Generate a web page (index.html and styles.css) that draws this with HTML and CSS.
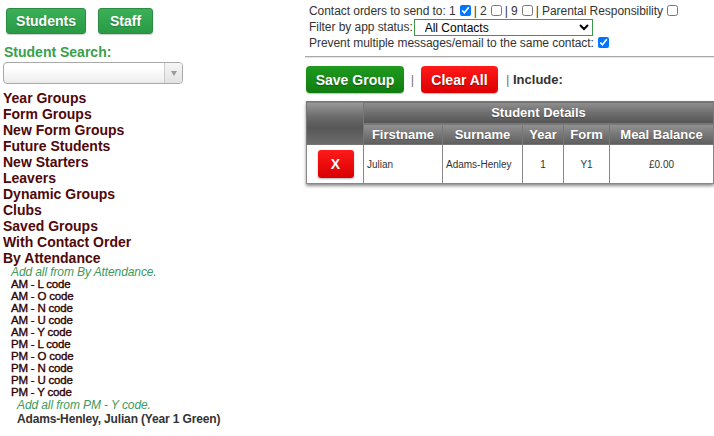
FILE: index.html
```html
<!DOCTYPE html>
<html>
<head>
<meta charset="utf-8">
<link rel="stylesheet" href="styles.css">
</head>
<body>
<div class="page">
  <div class="left">
    <div class="tabs">
      <button class="gbtn students">Students</button>
      <button class="gbtn staff">Staff</button>
    </div>
    <div class="search-label">Student Search:</div>
    <div class="chosen"><span class="chosen-arrow"><span class="tri"></span></span></div>
    <ul class="menu">
      <li>Year Groups</li>
      <li>Form Groups</li>
      <li>New Form Groups</li>
      <li>Future Students</li>
      <li>New Starters</li>
      <li>Leavers</li>
      <li>Dynamic Groups</li>
      <li>Clubs</li>
      <li>Saved Groups</li>
      <li>With Contact Order</li>
      <li>By Attendance</li>
    </ul>
    <div class="addall">Add all from By Attendance.</div>
    <ul class="codes">
      <li>AM - L code</li>
      <li>AM - O code</li>
      <li>AM - N code</li>
      <li>AM - U code</li>
      <li>AM - Y code</li>
      <li>PM - L code</li>
      <li>PM - O code</li>
      <li>PM - N code</li>
      <li>PM - U code</li>
      <li>PM - Y code</li>
    </ul>
    <div class="addall sub">Add all from PM - Y code.</div>
    <div class="student">Adams-Henley, Julian (Year 1 Green)</div>
  </div>
  <div class="right">
    <div class="opts">
      <div class="row">Contact orders to send to: 1<input type="checkbox" checked>| 2<input type="checkbox">| 9<input type="checkbox">| Parental Responsibility<input type="checkbox"></div>
      <div class="row">Filter by app status:<select class="appsel"><option>All Contacts</option></select></div>
      <div class="row">Prevent multiple messages/email to the same contact:<input type="checkbox" checked></div>
    </div>
    <div class="rule"></div>
    <div class="actions">
      <button class="abtn save">Save Group</button>
      <span class="sep">|</span>
      <button class="abtn clear">Clear All</button>
      <span class="include"><span class="sep2">|</span> Include:</span>
    </div>
    <table class="grid">
      <colgroup>
        <col class="c0"><col class="c1"><col class="c2"><col class="c3"><col class="c4"><col class="c5">
      </colgroup>
      <thead>
        <tr class="h1">
          <th rowspan="2" class="corner"></th>
          <th colspan="5">Student Details</th>
        </tr>
        <tr class="h2">
          <th>Firstname</th>
          <th>Surname</th>
          <th>Year</th>
          <th>Form</th>
          <th>Meal Balance</th>
        </tr>
      </thead>
      <tbody>
        <tr>
          <td class="xcell"><button class="xbtn">X</button></td>
          <td class="l">Julian</td>
          <td class="l">Adams-Henley</td>
          <td>1</td>
          <td>Y1</td>
          <td>£0.00</td>
        </tr>
      </tbody>
    </table>
  </div>
</div>
</body>
</html>
```

FILE: styles.css
```css
* { box-sizing: border-box; }
html, body { margin: 0; padding: 0; background: #fff; }
body { font-family: "Liberation Sans", Arial, sans-serif; width: 714px; height: 436px; overflow: hidden; }

.page { display: flex; }
.left { width: 306px; padding-top: 8px; }
.right { flex: 1; }

.tabs { display: flex; gap: 12px; padding-left: 6px; }
.gbtn {
  height: 26px; border: 1px solid #2a8c40; border-radius: 3px;
  background: linear-gradient(#3bb057, #2a9a45);
  color: #fff; font: bold 14px "Liberation Sans", Arial, sans-serif;
  text-shadow: 0 1px 1px rgba(0,0,0,.25); padding: 0; cursor: pointer;
  box-shadow: 0 1px 1px rgba(0,0,0,.2);
}
.students { width: 80px; }
.staff { width: 55px; }

.search-label { margin-top: 10px; padding-left: 4px; line-height: 16px; color: #3aa04a; font-weight: bold; font-size: 14px; }
.chosen {
  margin: 2px 0 0 3px; width: 180px; height: 22px; border: 1px solid #aaa; border-radius: 4px;
  background: linear-gradient(#fff 20%, #f2f2f2 80%, #e8e8e8);
  display: flex; justify-content: flex-end;
}
.chosen-arrow { width: 18px; border-left: 1px solid #ccc; display: flex; align-items: center; justify-content: center; background: linear-gradient(#f6f6f6, #e2e2e2); border-radius: 0 3px 3px 0; }
.tri { width: 0; height: 0; border-left: 3px solid transparent; border-right: 3px solid transparent; border-top: 5px solid #999; }

.menu, .codes { list-style: none; margin: 0; padding: 0; }
.menu { margin-top: 6px; padding-left: 3px; }
.menu li { font-size: 14px; font-weight: bold; line-height: 16px; color: #500808; }
.addall { font-size: 12px; font-style: italic; color: #3d9a5c; line-height: 12px; padding-left: 11px; letter-spacing: -0.1px; }
.codes { padding-left: 11px; }
.codes li { font-size: 11.5px; line-height: 12px; color: #2e0000; font-weight: normal; -webkit-text-stroke: 0.35px #2e0000; letter-spacing: -0.2px; }
.addall.sub { padding-left: 17px; line-height: 14px; }
.student { padding-left: 17px; font-size: 12px; font-weight: bold; line-height: 14px; color: #333; letter-spacing: -0.15px; }

.opts { padding: 3px 0 0 4px; font-size: 12px; color: #333; }
.row { height: 16px; line-height: 16px; white-space: nowrap; letter-spacing: -0.05px; }
.row input[type=checkbox] { width: 11px; height: 11px; margin: 0 3px 0 4px; vertical-align: -1px; }
.appsel {
  width: 179px; height: 17px; border: 1px solid #3c9a4a; font: 12px "Liberation Sans", Arial, sans-serif;
  color: #000; padding: 0 0 0 6px; vertical-align: top; margin: 0 0 0 1px; background: #fff; border-radius: 0;
}
.rule { margin-top: 5px; height: 2px; background: #a9a9a9; border-bottom: 1px solid #e4e4e4; }

.actions { display: flex; align-items: center; margin-top: 8px; padding-left: 1px; height: 27px; }
.abtn {
  height: 27px; border: none; border-radius: 4px; color: #fff; padding: 0;
  font: bold 14px "Liberation Sans", Arial, sans-serif; text-shadow: 0 1px 1px rgba(0,0,0,.35);
  box-shadow: 0 1px 1px rgba(0,0,0,.25);
}
.save { width: 98px; background: linear-gradient(#1f9a1f, #107d10); }
.clear { width: 77px; background: linear-gradient(#ff1a1a, #dd0000); }
.sep { width: 17px; text-align: center; color: #777; font-size: 13px; }
.include { margin-left: 8px; font-size: 13px; font-weight: bold; color: #333; }
.sep2 { font-weight: normal; color: #777; }

.grid {
  margin: 8px 0 0 1px; width: 407px; border-collapse: collapse; table-layout: fixed;
  box-shadow: 0 2px 3px rgba(0,0,0,.45); font-family: "Liberation Sans", Arial, sans-serif;
}
.c0 { width: 57px; } .c1 { width: 79px; } .c2 { width: 80px; } .c3 { width: 41px; } .c4 { width: 46px; } .c5 { width: 104px; }
.grid th { color: #fff; font-size: 13px; font-weight: bold; border: 1px solid #777; padding: 0; text-shadow: 0 1px 1px rgba(0,0,0,.3); }
.h1 th { height: 22px; background: linear-gradient(#8f8f8f, #6e6e6e 50%, #555 100%); }
.h2 th { height: 21px; background: linear-gradient(#929292, #747474 55%, #5e5e5e); }
.grid th.corner { background: linear-gradient(#9a9a9a, #6a6a6a 35%, #575757 60%, #6d6d6d); }
.grid td { height: 39px; border: 1px solid #888; font-size: 10px; color: #333; text-align: center; padding: 0 3px; background: #fff; }
.grid td.l { text-align: left; }
.grid td.xcell { padding: 0; }
.xbtn {
  width: 36px; height: 28px; border: none; border-radius: 3px; color: #fff;
  background: linear-gradient(#ff1a1a, #d80000); font: bold 14px "Liberation Sans", Arial, sans-serif;
  box-shadow: 0 1px 2px rgba(0,0,0,.3); padding: 0; margin-left: 1px;
}
```
